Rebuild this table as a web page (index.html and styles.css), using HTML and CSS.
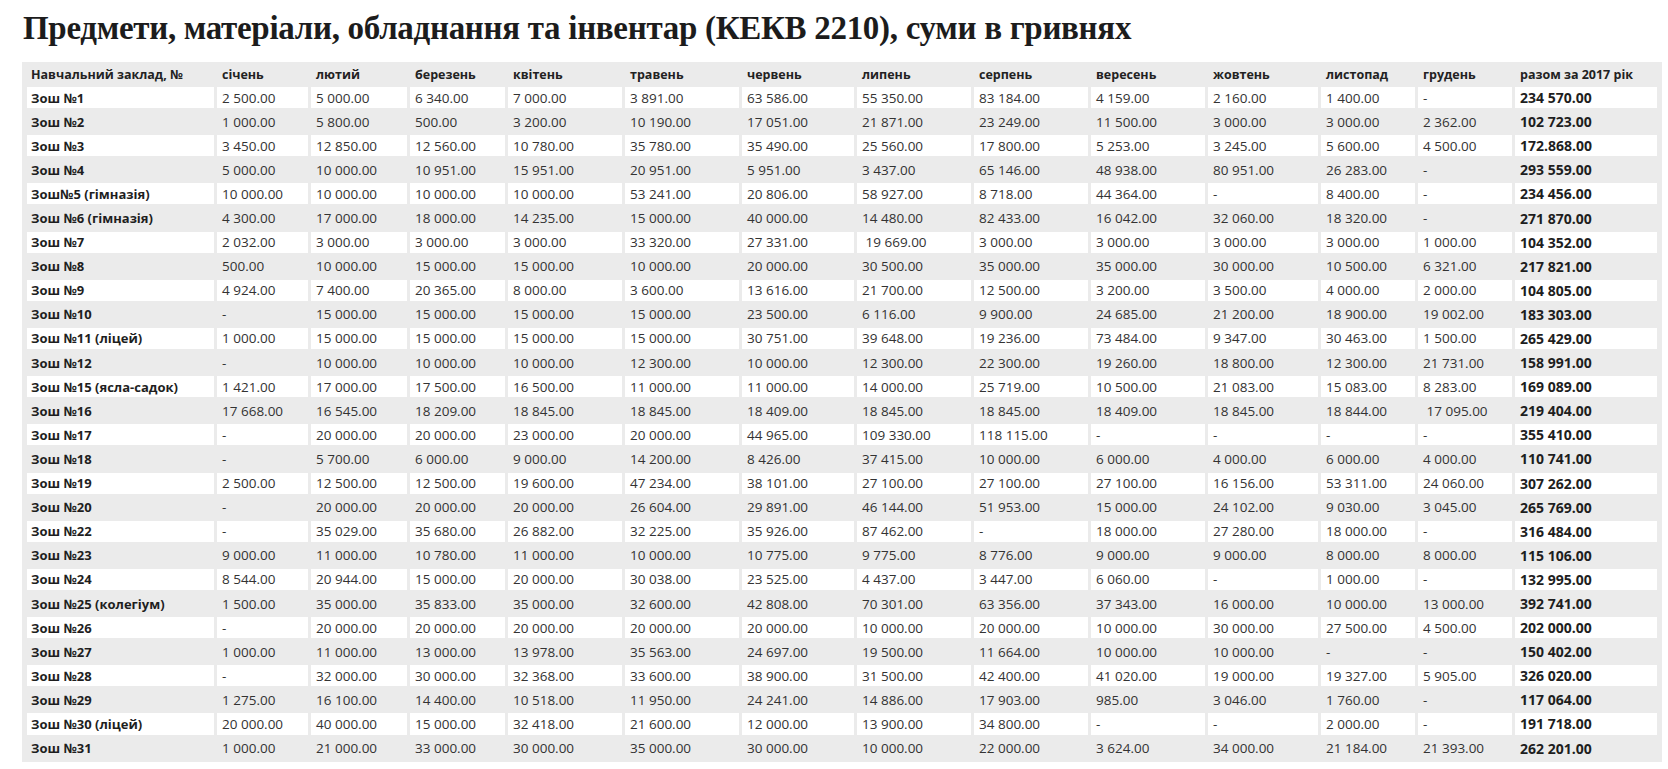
FILE: index.html
```html
<!DOCTYPE html>
<html lang="uk">
<head>
<meta charset="utf-8">
<title>Предмети, матеріали, обладнання та інвентар (КЕКВ 2210)</title>
<link rel="stylesheet" href="styles.css">
</head>
<body>
<h1 class="title">Предмети, матеріали, обладнання та інвентар (КЕКВ 2210), суми в гривнях</h1>
<div class="table-wrap">
<table class="data">
<thead>
<tr><th>Навчальний заклад, №</th><th>січень</th><th>лютий</th><th>березень</th><th>квітень</th><th>травень</th><th>червень</th><th>липень</th><th>серпень</th><th>вересень</th><th>жовтень</th><th>листопад</th><th>грудень</th><th>разом за 2017 рік</th></tr>
</thead>
<tbody>
<tr><td>Зош №1</td><td>2 500.00</td><td>5 000.00</td><td>6 340.00</td><td>7 000.00</td><td>3 891.00</td><td>63 586.00</td><td>55 350.00</td><td>83 184.00</td><td>4 159.00</td><td>2 160.00</td><td>1 400.00</td><td>-</td><td>234 570.00</td></tr>
<tr><td>Зош №2</td><td>1 000.00</td><td>5 800.00</td><td>500.00</td><td>3 200.00</td><td>10 190.00</td><td>17 051.00</td><td>21 871.00</td><td>23 249.00</td><td>11 500.00</td><td>3 000.00</td><td>3 000.00</td><td>2 362.00</td><td>102 723.00</td></tr>
<tr><td>Зош №3</td><td>3 450.00</td><td>12 850.00</td><td>12 560.00</td><td>10 780.00</td><td>35 780.00</td><td>35 490.00</td><td>25 560.00</td><td>17 800.00</td><td>5 253.00</td><td>3 245.00</td><td>5 600.00</td><td>4 500.00</td><td>172.868.00</td></tr>
<tr><td>Зош №4</td><td>5 000.00</td><td>10 000.00</td><td>10 951.00</td><td>15 951.00</td><td>20 951.00</td><td>5 951.00</td><td>3 437.00</td><td>65 146.00</td><td>48 938.00</td><td>80 951.00</td><td>26 283.00</td><td>-</td><td>293 559.00</td></tr>
<tr><td>Зош№5 (гімназія)</td><td>10 000.00</td><td>10 000.00</td><td>10 000.00</td><td>10 000.00</td><td>53 241.00</td><td>20 806.00</td><td>58 927.00</td><td>8 718.00</td><td>44 364.00</td><td>-</td><td>8 400.00</td><td>-</td><td>234 456.00</td></tr>
<tr><td>Зош №6 (гімназія)</td><td>4 300.00</td><td>17 000.00</td><td>18 000.00</td><td>14 235.00</td><td>15 000.00</td><td>40 000.00</td><td>14 480.00</td><td>82 433.00</td><td>16 042.00</td><td>32 060.00</td><td>18 320.00</td><td>-</td><td>271 870.00</td></tr>
<tr><td>Зош №7</td><td>2 032.00</td><td>3 000.00</td><td>3 000.00</td><td>3 000.00</td><td>33 320.00</td><td>27 331.00</td><td>&nbsp;19 669.00</td><td>3 000.00</td><td>3 000.00</td><td>3 000.00</td><td>3 000.00</td><td>1 000.00</td><td>104 352.00</td></tr>
<tr><td>Зош №8</td><td>500.00</td><td>10 000.00</td><td>15 000.00</td><td>15 000.00</td><td>10 000.00</td><td>20 000.00</td><td>30 500.00</td><td>35 000.00</td><td>35 000.00</td><td>30 000.00</td><td>10 500.00</td><td>6 321.00</td><td>217 821.00</td></tr>
<tr><td>Зош №9</td><td>4 924.00</td><td>7 400.00</td><td>20 365.00</td><td>8 000.00</td><td>3 600.00</td><td>13 616.00</td><td>21 700.00</td><td>12 500.00</td><td>3 200.00</td><td>3 500.00</td><td>4 000.00</td><td>2 000.00</td><td>104 805.00</td></tr>
<tr><td>Зош №10</td><td>-</td><td>15 000.00</td><td>15 000.00</td><td>15 000.00</td><td>15 000.00</td><td>23 500.00</td><td>6 116.00</td><td>9 900.00</td><td>24 685.00</td><td>21 200.00</td><td>18 900.00</td><td>19 002.00</td><td>183 303.00</td></tr>
<tr><td>Зош №11 (ліцей)</td><td>1 000.00</td><td>15 000.00</td><td>15 000.00</td><td>15 000.00</td><td>15 000.00</td><td>30 751.00</td><td>39 648.00</td><td>19 236.00</td><td>73 484.00</td><td>9 347.00</td><td>30 463.00</td><td>1 500.00</td><td>265 429.00</td></tr>
<tr><td>Зош №12</td><td>-</td><td>10 000.00</td><td>10 000.00</td><td>10 000.00</td><td>12 300.00</td><td>10 000.00</td><td>12 300.00</td><td>22 300.00</td><td>19 260.00</td><td>18 800.00</td><td>12 300.00</td><td>21 731.00</td><td>158 991.00</td></tr>
<tr><td>Зош №15 (ясла-садок)</td><td>1 421.00</td><td>17 000.00</td><td>17 500.00</td><td>16 500.00</td><td>11 000.00</td><td>11 000.00</td><td>14 000.00</td><td>25 719.00</td><td>10 500.00</td><td>21 083.00</td><td>15 083.00</td><td>8 283.00</td><td>169 089.00</td></tr>
<tr><td>Зош №16</td><td>17 668.00</td><td>16 545.00</td><td>18 209.00</td><td>18 845.00</td><td>18 845.00</td><td>18 409.00</td><td>18 845.00</td><td>18 845.00</td><td>18 409.00</td><td>18 845.00</td><td>18 844.00</td><td>&nbsp;17 095.00</td><td>219 404.00</td></tr>
<tr><td>Зош №17</td><td>-</td><td>20 000.00</td><td>20 000.00</td><td>23 000.00</td><td>20 000.00</td><td>44 965.00</td><td>109 330.00</td><td>118 115.00</td><td>-</td><td>-</td><td>-</td><td>-</td><td>355 410.00</td></tr>
<tr><td>Зош №18</td><td>-</td><td>5 700.00</td><td>6 000.00</td><td>9 000.00</td><td>14 200.00</td><td>8 426.00</td><td>37 415.00</td><td>10 000.00</td><td>6 000.00</td><td>4 000.00</td><td>6 000.00</td><td>4 000.00</td><td>110 741.00</td></tr>
<tr><td>Зош №19</td><td>2 500.00</td><td>12 500.00</td><td>12 500.00</td><td>19 600.00</td><td>47 234.00</td><td>38 101.00</td><td>27 100.00</td><td>27 100.00</td><td>27 100.00</td><td>16 156.00</td><td>53 311.00</td><td>24 060.00</td><td>307 262.00</td></tr>
<tr><td>Зош №20</td><td>-</td><td>20 000.00</td><td>20 000.00</td><td>20 000.00</td><td>26 604.00</td><td>29 891.00</td><td>46 144.00</td><td>51 953.00</td><td>15 000.00</td><td>24 102.00</td><td>9 030.00</td><td>3 045.00</td><td>265 769.00</td></tr>
<tr><td>Зош №22</td><td>-</td><td>35 029.00</td><td>35 680.00</td><td>26 882.00</td><td>32 225.00</td><td>35 926.00</td><td>87 462.00</td><td>-</td><td>18 000.00</td><td>27 280.00</td><td>18 000.00</td><td>-</td><td>316 484.00</td></tr>
<tr><td>Зош №23</td><td>9 000.00</td><td>11 000.00</td><td>10 780.00</td><td>11 000.00</td><td>10 000.00</td><td>10 775.00</td><td>9 775.00</td><td>8 776.00</td><td>9 000.00</td><td>9 000.00</td><td>8 000.00</td><td>8 000.00</td><td>115 106.00</td></tr>
<tr><td>Зош №24</td><td>8 544.00</td><td>20 944.00</td><td>15 000.00</td><td>20 000.00</td><td>30 038.00</td><td>23 525.00</td><td>4 437.00</td><td>3 447.00</td><td>6 060.00</td><td>-</td><td>1 000.00</td><td>-</td><td>132 995.00</td></tr>
<tr><td>Зош №25 (колегіум)</td><td>1 500.00</td><td>35 000.00</td><td>35 833.00</td><td>35 000.00</td><td>32 600.00</td><td>42 808.00</td><td>70 301.00</td><td>63 356.00</td><td>37 343.00</td><td>16 000.00</td><td>10 000.00</td><td>13 000.00</td><td>392 741.00</td></tr>
<tr><td>Зош №26</td><td>-</td><td>20 000.00</td><td>20 000.00</td><td>20 000.00</td><td>20 000.00</td><td>20 000.00</td><td>10 000.00</td><td>20 000.00</td><td>10 000.00</td><td>30 000.00</td><td>27 500.00</td><td>4 500.00</td><td>202 000.00</td></tr>
<tr><td>Зош №27</td><td>1 000.00</td><td>11 000.00</td><td>13 000.00</td><td>13 978.00</td><td>35 563.00</td><td>24 697.00</td><td>19 500.00</td><td>11 664.00</td><td>10 000.00</td><td>10 000.00</td><td>-</td><td>-</td><td>150 402.00</td></tr>
<tr><td>Зош №28</td><td>-</td><td>32 000.00</td><td>30 000.00</td><td>32 368.00</td><td>33 600.00</td><td>38 900.00</td><td>31 500.00</td><td>42 400.00</td><td>41 020.00</td><td>19 000.00</td><td>19 327.00</td><td>5 905.00</td><td>326 020.00</td></tr>
<tr><td>Зош №29</td><td>1 275.00</td><td>16 100.00</td><td>14 400.00</td><td>10 518.00</td><td>11 950.00</td><td>24 241.00</td><td>14 886.00</td><td>17 903.00</td><td>985.00</td><td>3 046.00</td><td>1 760.00</td><td>-</td><td>117 064.00</td></tr>
<tr><td>Зош №30 (ліцей)</td><td>20 000.00</td><td>40 000.00</td><td>15 000.00</td><td>32 418.00</td><td>21 600.00</td><td>12 000.00</td><td>13 900.00</td><td>34 800.00</td><td>-</td><td>-</td><td>2 000.00</td><td>-</td><td>191 718.00</td></tr>
<tr><td>Зош №31</td><td>1 000.00</td><td>21 000.00</td><td>33 000.00</td><td>30 000.00</td><td>35 000.00</td><td>30 000.00</td><td>10 000.00</td><td>22 000.00</td><td>3 624.00</td><td>34 000.00</td><td>21 184.00</td><td>21 393.00</td><td>262 201.00</td></tr>
</tbody>
</table>
</div>
</body>
</html>
```

FILE: styles.css
```css
* {
  box-sizing: border-box;
}

body {
  margin: 0;
  background: #ffffff;
  color: #2b2b2b;
  font-family: "Open Sans", "Noto Sans", sans-serif;
}

.title {
  margin: 8px 0 14px 23px;
  font-family: "Liberation Serif", "DejaVu Serif", serif;
  font-size: 33px;
  line-height: 40px;
  letter-spacing: -0.3px;
  font-weight: bold;
  color: #1c1c1c;
  white-space: nowrap;
}

.table-wrap {
  margin-left: 22px;
  width: 1640px;
  padding: 0 2px;
  background: #ebebeb;
}

.data {
  width: 1636px;
  table-layout: fixed;
  border-collapse: separate;
  border-spacing: 3px;
  font-size: 13.5px;
}

.data th,
.data td {
  padding: 0 4px 0 5px;
  text-align: left;
  vertical-align: middle;
  white-space: nowrap;
  overflow: hidden;
}

.data th {
  height: 19px;
  font-size: 12.5px;
  font-weight: bold;
  color: #222222;
}

.data td {
  height: 21.1px;
  color: #333333;
}

.data td:first-child {
  padding-left: 4px;
  font-size: 13px;
  font-weight: bold;
  color: #1e1e1e;
}

.data th:first-child {
  padding-left: 4px;
}

.data td:last-child {
  font-size: 14px;
  font-weight: bold;
  color: #1e1e1e;
}

.data tbody tr:nth-child(odd) td {
  background: #ffffff;
}

.data th:nth-child(1) { width: 187px; }
.data th:nth-child(2) { width: 91px; }
.data th:nth-child(3) { width: 96px; }
.data th:nth-child(4) { width: 95px; }
.data th:nth-child(5) { width: 114px; }
.data th:nth-child(6) { width: 114px; }
.data th:nth-child(7) { width: 112px; }
.data th:nth-child(8) { width: 114px; }
.data th:nth-child(9) { width: 114px; }
.data th:nth-child(10) { width: 114px; }
.data th:nth-child(11) { width: 110px; }
.data th:nth-child(12) { width: 94px; }
.data th:nth-child(13) { width: 94px; }
.data th:nth-child(14) { width: 142px; }
```
